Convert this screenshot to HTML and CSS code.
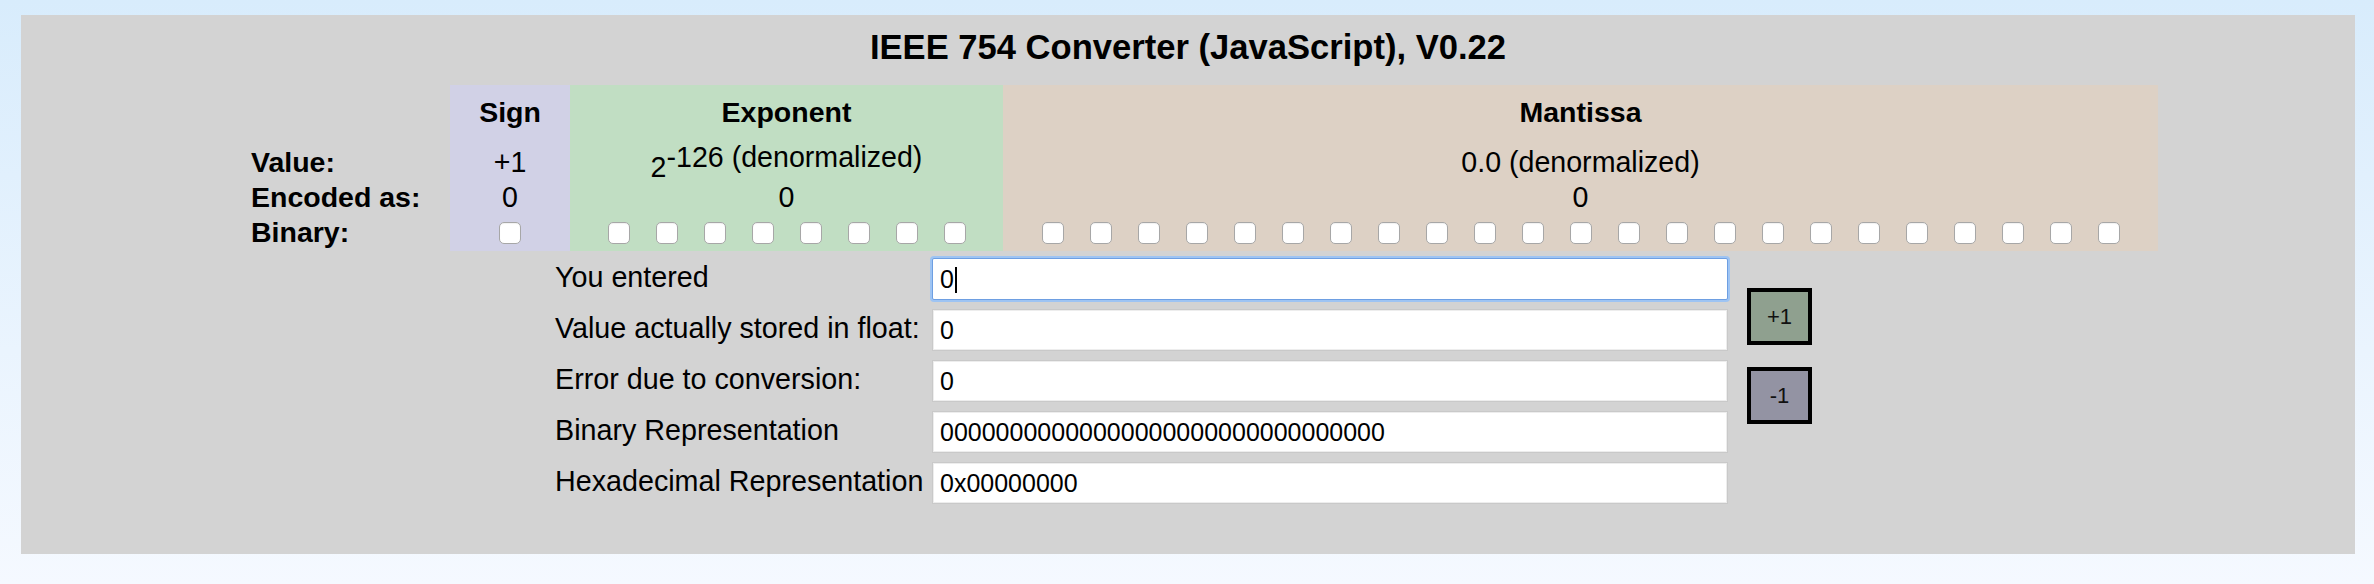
FILE: index.html
```html
<!DOCTYPE html>
<html lang="en">
<head>
<meta charset="utf-8">
<title>IEEE 754 Converter</title>
<link rel="stylesheet" href="styles.css">
</head>
<body>
<main class="panel">
  <h1 class="title">IEEE 754 Converter (JavaScript), V0.22</h1>

  <div class="fields">
    <div class="cell lbl r-head"></div>
    <div class="cell sign hd r-head">Sign</div>
    <div class="cell exp hd r-head">Exponent</div>
    <div class="cell man hd r-head">Mantissa</div>

    <div class="cell lbl r-val">Value:</div>
    <div class="cell sign r-val">+1</div>
    <div class="cell exp r-val-exp"><span class="base">2</span><span class="pow">-126 (denormalized)</span></div>
    <div class="cell man r-val">0.0 (denormalized)</div>

    <div class="cell lbl r-enc">Encoded as:</div>
    <div class="cell sign r-enc">0</div>
    <div class="cell exp r-enc">0</div>
    <div class="cell man r-enc">0</div>

    <div class="cell lbl r-bin">Binary:</div>
    <div class="cell sign bits"><input type="checkbox" class="bit"></div>
    <div class="cell exp bits">
      <input type="checkbox" class="bit"><input type="checkbox" class="bit"><input type="checkbox" class="bit"><input type="checkbox" class="bit"><input type="checkbox" class="bit"><input type="checkbox" class="bit"><input type="checkbox" class="bit"><input type="checkbox" class="bit">
    </div>
    <div class="cell man bits">
      <input type="checkbox" class="bit"><input type="checkbox" class="bit"><input type="checkbox" class="bit"><input type="checkbox" class="bit"><input type="checkbox" class="bit"><input type="checkbox" class="bit"><input type="checkbox" class="bit"><input type="checkbox" class="bit"><input type="checkbox" class="bit"><input type="checkbox" class="bit"><input type="checkbox" class="bit"><input type="checkbox" class="bit"><input type="checkbox" class="bit"><input type="checkbox" class="bit"><input type="checkbox" class="bit"><input type="checkbox" class="bit"><input type="checkbox" class="bit"><input type="checkbox" class="bit"><input type="checkbox" class="bit"><input type="checkbox" class="bit"><input type="checkbox" class="bit"><input type="checkbox" class="bit"><input type="checkbox" class="bit">
    </div>
  </div>

  <div class="form">
    <div class="steppers">
      <button class="step plus" type="button">+1</button>
      <button class="step minus" type="button">-1</button>
    </div>

    <label class="flabel">You entered</label>
    <div class="field focused"><span class="entry">0</span><span class="caret"></span></div>

    <label class="flabel">Value actually stored in float:</label>
    <input class="field" type="text" value="0">

    <label class="flabel">Error due to conversion:</label>
    <input class="field" type="text" value="0">

    <label class="flabel">Binary Representation</label>
    <input class="field" type="text" value="00000000000000000000000000000000">

    <label class="flabel">Hexadecimal Representation</label>
    <input class="field" type="text" value="0x00000000">
  </div>
</main>
</body>
</html>
```

FILE: styles.css
```css
html, body {
  margin: 0;
}

body {
  box-sizing: border-box;
  min-height: 584px;
  padding: 15px 19px 0 21px;
  background: linear-gradient(to bottom, #d8ecfc 0%, #eaf4fe 60%, #f5f9ff 100%);
  font-family: "Liberation Sans", Arial, Helvetica, sans-serif;
  color: #000;
}

.panel {
  background: #d3d3d3;
  padding: 11px 0 46px 0;
}

.title {
  margin: 0;
  font-size: 34.6px;
  font-weight: bold;
  line-height: 42px;
  text-align: center;
}

/* ---------- bit field table ---------- */
.fields {
  display: grid;
  grid-template-columns: 199px 120px 433px 1155px;
  grid-template-rows: 46px 48px 35px 37px;
  margin: 17px 0 0 230px;
  width: max-content;
}

.cell {
  font-size: 28.6px;
  line-height: 32px;
  text-align: center;
  white-space: nowrap;
  box-sizing: border-box;
}

.lbl {
  text-align: left;
  font-weight: bold;
  font-size: 28.5px;
}

.hd {
  font-weight: bold;
  font-size: 28.5px;
}

.sign { background: #d1d1e6; }
.exp  { background: #c1dec3; }
.man  { background: #ddd1c5; }

.r-head { padding-top: 11px; }
.r-val  { padding-top: 15px; }
.r-enc  { padding-top: 2px; }
.r-bin  { padding-top: 2px; }

.r-val-exp { padding-top: 10px; }
.base { vertical-align: -5px; }
.pow  { vertical-align: 5px; }

.bits {
  display: flex;
  justify-content: center;
  align-items: flex-start;
  gap: 26px;
  padding-top: 8px;
}

.bit {
  appearance: none;
  -webkit-appearance: none;
  width: 22px;
  height: 22px;
  margin: 0;
  box-sizing: border-box;
  border: 1px solid #a7a7a7;
  border-radius: 5px;
  background: #fff;
  box-shadow: inset 0 1px 1px rgba(0, 0, 0, 0.06);
}

/* ---------- form ---------- */
.form {
  display: grid;
  grid-template-columns: 377px 796px auto;
  grid-auto-rows: 51px;
  margin: 2px 0 0 534px;
  width: max-content;
}

.flabel {
  grid-column: 1;
  align-self: center;
  font-size: 28.7px;
  line-height: 32px;
  padding-bottom: 4px;
  white-space: nowrap;
}

.field {
  grid-column: 2;
  align-self: center;
  box-sizing: border-box;
  width: 796px;
  height: 42px;
  margin: 0;
  padding: 2px 0 0 7px;
  border: 1px solid #c9c9c9;
  box-shadow: inset 0 0 0 1px #ededed;
  background: #fff;
  font-family: "Liberation Sans", Arial, Helvetica, sans-serif;
  font-size: 25px;
  color: #000;
  outline: none;
}

.field.focused {
  display: flex;
  align-items: center;
  padding: 2px 0 0 7px;
  border: 1px solid #6e9fe2;
  box-shadow: 0 0 0 2px #9ec4f3;
  border-radius: 2px;
}

.caret {
  width: 2px;
  height: 26px;
  margin-left: 1px;
  background: #000;
}

.steppers {
  grid-column: 3;
  grid-row: 1 / span 5;
  align-self: start;
  display: flex;
  flex-direction: column;
  gap: 22px;
  margin-left: 19px;
  padding-top: 35px;
}

.step {
  box-sizing: border-box;
  width: 65px;
  height: 57px;
  margin: 0;
  padding: 0;
  border: 4px solid #000;
  border-radius: 0;
  font-family: "Liberation Sans", Arial, Helvetica, sans-serif;
  font-size: 22px;
  color: #111;
}

.plus  { background: #8fa08f; }
.minus { background: #9393a3; }
```
